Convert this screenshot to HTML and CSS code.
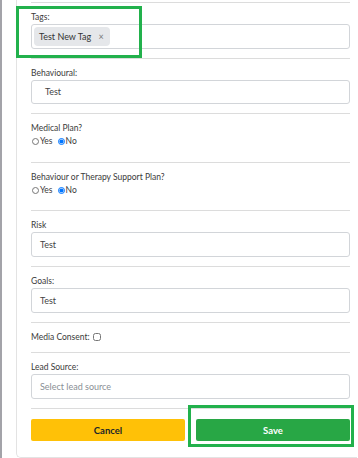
FILE: index.html
```html
<!DOCTYPE html>
<html lang="en">
<head>
    <meta charset="UTF-8">
    <meta name="viewport" content="width=device-width, initial-scale=1.0">
    <title>Student Details</title>
    <link rel="stylesheet" href="styles.css">
</head>
<body>
    <div class="edge"></div>
    <div class="card">
        <div class="field">
            <label class="label">Tags:</label>
            <div class="input tags">
                <span class="tag">Test New Tag <span class="tag-x">&times;</span></span>
            </div>
        </div>

        <div class="field">
            <label class="label">Behavioural:</label>
            <div class="input wide">Test</div>
        </div>

        <div class="field radio-field">
            <label class="label">Medical Plan?</label>
            <div class="radios">
                <label><input type="radio" name="medical">Yes</label>
                <label><input type="radio" name="medical" checked>No</label>
            </div>
        </div>

        <div class="field radio-field">
            <label class="label">Behaviour or Therapy Support Plan?</label>
            <div class="radios">
                <label><input type="radio" name="therapy">Yes</label>
                <label><input type="radio" name="therapy" checked>No</label>
            </div>
        </div>

        <div class="field">
            <label class="label">Risk</label>
            <div class="input">Test</div>
        </div>

        <div class="field">
            <label class="label">Goals:</label>
            <div class="input">Test</div>
        </div>

        <div class="field check-field">
            <label class="label">Media Consent: <input type="checkbox"></label>
        </div>

        <div class="field">
            <label class="label">Lead Source:</label>
            <div class="input placeholder">Select lead source</div>
        </div>

        <div class="field buttons">
            <button class="btn cancel">Cancel</button>
            <button class="btn save">Save</button>
        </div>
    </div>

    <!-- green highlight boxes drawn over the form -->
    <div class="highlight tags-mark"></div>
    <div class="highlight save-mark"></div>
</body>
</html>
```

FILE: styles.css
```css
html, body {
    height: 100%;
}
body {
    margin: 0;
    display: flex;
    align-items: flex-start;
    overflow: hidden;
    position: relative;
    background: #fff;
    font-family: Lato, "Noto Sans", Arial, sans-serif;
    font-size: 8.5px;
    color: #3a3a3a;
}
.edge {
    width: 2px;
    height: 100%;
    flex: none;
    background-color: #a3a3a9;
}
.card {
    flex: none;
    width: 319px;
    margin-left: 14px;
    padding: 2px 7px 0 14px;
    border-left: 1px solid #e3e3e3;
    border-bottom: 1px solid #e3e3e3;
    border-bottom-left-radius: 5px;
}
.field {
    border-top: 1px solid #dcdcdc;
    padding: 8px 0 9px;
}
.label {
    display: block;
    height: 13px;
    line-height: 12px;
}
.input {
    box-sizing: border-box;
    height: 25px;
    line-height: 23px;
    border: 1px solid #d2d5d9;
    border-radius: 3px;
    padding-left: 8px;
    font-size: 9px;
    color: #444;
}
.input.wide {
    height: 24px;
    line-height: 22px;
    padding-left: 13px;
}
.input.placeholder {
    color: #8a8f95;
}
.tags {
    display: flex;
    align-items: center;
    padding-left: 2px;
}
.tag {
    display: inline-block;
    height: 19px;
    line-height: 19px;
    padding: 0 6px 0 5px;
    background-color: #e5e7ea;
    border-radius: 4px;
    color: #333;
}
.tag-x {
    margin-left: 5px;
    color: #777;
}
.radio-field {
    padding-bottom: 13.5px;
}
.radios {
    display: flex;
    height: 13px;
    line-height: 13px;
    gap: 4px;
}
.radios label {
    display: flex;
    align-items: center;
}
.radios input {
    width: 7px;
    height: 7px;
    margin: 0 1px 0 1px;
}
.check-field {
    padding-bottom: 8px;
}
.check-field .label input {
    width: 8px;
    height: 8px;
    margin: 0 0 0 1px;
    vertical-align: -1px;
}
.buttons {
    display: grid;
    grid-template-columns: 1fr 1fr;
    gap: 11px;
    padding: 10px 0 16px;
}
.btn {
    height: 22px;
    border: none;
    border-radius: 2px;
    font-family: inherit;
    font-size: 9.5px;
    font-weight: bold;
}
.cancel {
    background-color: #ffc107;
    color: #212529;
}
.save {
    background-color: #28a745;
    color: #fff;
}
.highlight {
    position: absolute;
    box-sizing: border-box;
    border: 3px solid #22b14c;
}
.tags-mark {
    left: 16px;
    top: 6px;
    width: 126px;
    height: 52px;
}
.save-mark {
    left: 188px;
    top: 405px;
    width: 166px;
    height: 42px;
}
```
